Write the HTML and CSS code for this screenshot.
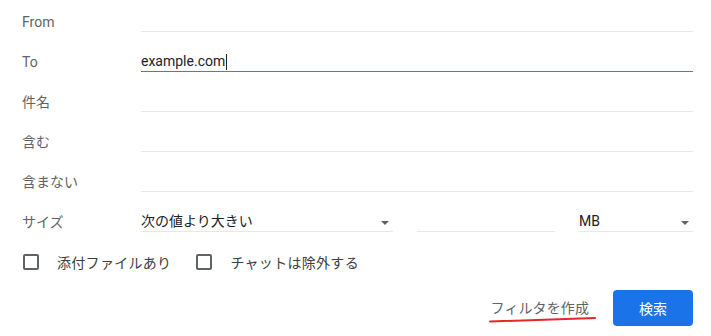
FILE: index.html
```html
<!DOCTYPE html>
<html lang="ja">
<head>
<meta charset="utf-8">
<link rel="stylesheet" href="styles.css">
</head>
<body>
<div class="form">
  <div class="row">
    <div class="label">From</div>
    <div class="field"></div>
  </div>
  <div class="row">
    <div class="label">To</div>
    <div class="field focused"><span class="value">example.com</span><span class="caret"></span></div>
  </div>
  <div class="row">
    <div class="label">件名</div>
    <div class="field"></div>
  </div>
  <div class="row">
    <div class="label">含む</div>
    <div class="field"></div>
  </div>
  <div class="row">
    <div class="label">含まない</div>
    <div class="field"></div>
  </div>
  <div class="row">
    <div class="label">サイズ</div>
    <div class="size">
      <div class="select sel-op"><span class="value">次の値より大きい</span><span class="arrow"></span></div>
      <div class="field num"></div>
      <div class="select sel-unit"><span class="value">MB</span><span class="arrow"></span></div>
    </div>
  </div>
  <div class="checks">
    <label class="check"><span class="box"></span><span class="ctext">添付ファイルあり</span></label>
    <label class="check"><span class="box"></span><span class="ctext">チャットは除外する</span></label>
  </div>
  <div class="actions">
    <span class="link">フィルタを作成<svg class="mark" width="110" height="8" viewBox="0 0 110 8"><path d="M2 5.5 C 30 4.5, 60 3.8, 107 2" fill="none" stroke="#e8252b" stroke-width="2" stroke-linecap="round"/></svg></span>
    <button class="btn">検索</button>
  </div>
</div>
</body>
</html>
```
FILE: styles.css
```css
html, body {
  margin: 0;
  padding: 0;
  background: #ffffff;
}
body {
  font-family: Roboto, "Noto Sans CJK JP", sans-serif;
  font-size: 14px;
  color: #202124;
}
.form {
  padding: 0 18px 0 22px;
}
.row {
  display: flex;
  height: 40px;
  padding-top: 12px;
  box-sizing: border-box;
}
.label {
  width: 119px;
  flex: none;
  line-height: 20px;
  color: #5f6368;
}
.field {
  flex: 1;
  height: 19px;
  line-height: 19px;
  border-bottom: 1px solid #e8e8e8;
  display: flex;
  align-items: center;
}
.field.focused {
  border-bottom-color: #3a7be6;
}
.value {
  color: #202124;
}
.caret {
  display: inline-block;
  width: 1px;
  height: 16px;
  background: #202124;
  margin-left: 1px;
}
.size {
  flex: 1;
  display: flex;
  gap: 24px;
}
.select {
  height: 19px;
  line-height: 19px;
  border-bottom: 1px solid #e8e8e8;
  display: flex;
  align-items: center;
  justify-content: space-between;
  padding-right: 4px;
}
.sel-op {
  width: 248px;
}
.num {
  flex: none;
  width: 138px;
}
.sel-unit {
  width: 110px;
}
.arrow {
  width: 0;
  height: 0;
  border-left: 4px solid transparent;
  border-right: 4px solid transparent;
  border-top: 4px solid #5f6368;
  margin-top: 2px;
}
.checks {
  display: flex;
  align-items: center;
  height: 44px;
  padding-left: 1px;
  gap: 25px;
}
.check {
  display: flex;
  align-items: center;
  color: #3c4043;
}
.ctext {
  letter-spacing: 0.3px;
}
.box {
  width: 12px;
  height: 12px;
  border: 2px solid #5f6368;
  border-radius: 2px;
  margin-right: 18px;
}
.actions {
  display: flex;
  justify-content: flex-end;
  align-items: center;
  gap: 24px;
  margin-top: 6px;
}
.link {
  position: relative;
  color: #5f6368;
  line-height: 20px;
  letter-spacing: 0.1px;
}
.mark {
  position: absolute;
  left: -3px;
  top: 18px;
}
.btn {
  width: 80px;
  height: 36px;
  border: none;
  border-radius: 4px;
  background: #1a73e8;
  color: #ffffff;
  font-family: Roboto, "Noto Sans CJK JP", sans-serif;
  font-size: 14px;
  padding: 0;
}
```
